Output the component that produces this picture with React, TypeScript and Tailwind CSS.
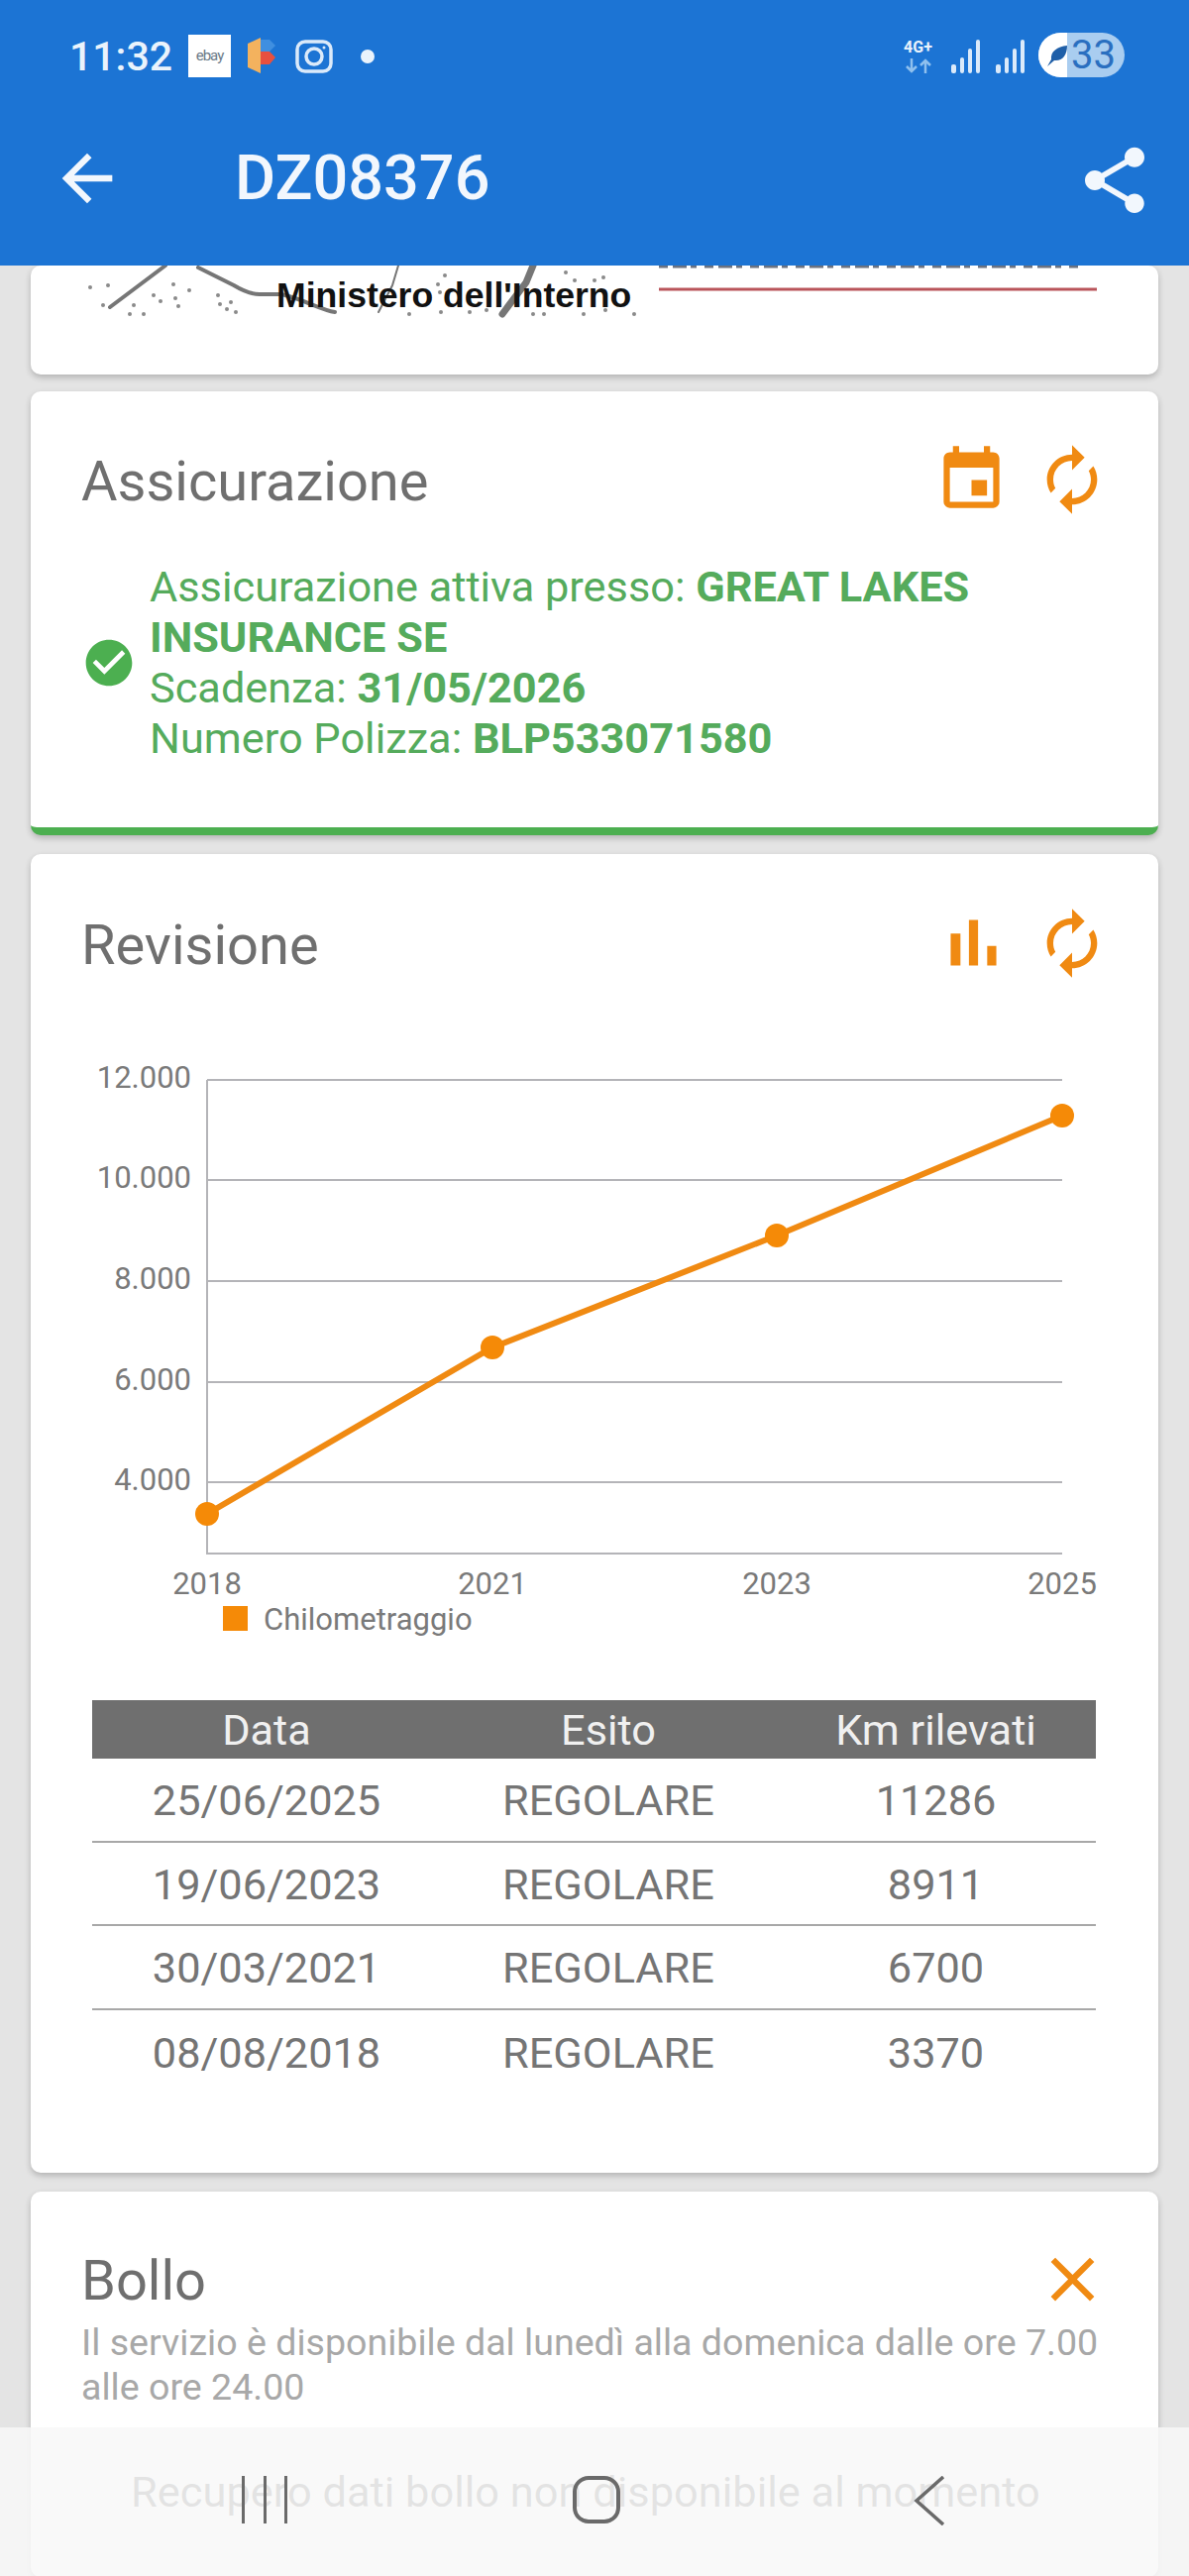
const ORANGE = "#f08a12";

const renewPath =
  "M12 6v3l4-4-4-4v3c-4.42 0-8 3.58-8 8 0 1.57.46 3.03 1.24 4.26L6.7 14.8c-.45-.83-.7-1.79-.7-2.8 0-3.31 2.69-6 6-6zm6.76 1.74L17.3 9.2c.44.84.7 1.79.7 2.8 0 3.31-2.69 6-6 6v-3l-4 4 4 4v-3c4.42 0 8-3.58 8-8 0-1.57-.46-3.03-1.24-4.26z";

function Icon({ d, size, color = ORANGE }: { d: string; size: number; color?: string }) {
  return (
    <svg viewBox="0 0 24 24" width={size} height={size} fill={color} className="block shrink-0">
      <path d={d} />
    </svg>
  );
}

function Signal() {
  return (
    <svg width="31" height="34" viewBox="0 0 31 34" className="block">
      <rect x="0" y="25" width="5" height="9" rx="2" fill="#dbeafa" />
      <rect x="9" y="18" width="4" height="16" rx="2" fill="#dbeafa" />
      <rect x="17" y="9" width="4" height="25" rx="2" fill="#dbeafa" />
      <rect x="25" y="0" width="4" height="34" rx="2" fill="#dbeafa" />
    </svg>
  );
}

function StatusBar() {
  return (
    <div className="flex h-[112px] items-start pt-[33px] pl-[70px] text-[#eaf3fc]">
      <span className="mt-[2px] w-[120px] text-[41px] leading-[44px] font-medium">11:32</span>
      <div className="mt-[2px] flex h-[43px] w-[43px] items-center justify-center bg-white text-[15px] tracking-[-1px] text-[#6b7a88]">
        ebay
      </div>
      <svg width="28" height="36" viewBox="0 0 28 36" className="mt-[5px] ml-[17px] block">
        <path d="M0 6 13 0v36L0 30z" fill="#f3b25e" />
        <path d="M13 2h9l6 6-6 6h-9z" fill="#3f8fe0" />
        <path d="M13 14h9l6 6-6 7h-9z" fill="#e8503f" />
      </svg>
      <svg width="38" height="34" viewBox="0 0 38 34" className="mt-[7px] ml-[20px] block" fill="none" stroke="#dbeafa" strokeWidth="3.5">
        <rect x="2" y="2" width="34" height="30" rx="8" />
        <ellipse cx="19" cy="17" rx="8" ry="8" />
        <circle cx="29" cy="8" r="1.5" fill="#dbeafa" stroke="none" />
      </svg>
      <div className="mt-[17px] ml-[28px] h-[14px] w-[14px] rounded-full bg-[#eaf3fc]" />
      <div className="ml-auto flex items-start pr-[65px]">
        <div className="mt-[7px] flex w-[37px] flex-col items-center leading-none">
          <span className="text-[16px] font-bold">4G+</span>
          <svg width="28" height="15" viewBox="0 0 28 15" fill="none" stroke="#8fc0ee" strokeWidth="2.5" className="mt-[3px] block">
            <path d="M7 0v13M2 8l5 5 5-5M21 15V2M16 7l5-5 5 5" />
          </svg>
        </div>
        <div className="mt-[7px] ml-[15px]">
          <Signal />
        </div>
        <div className="mt-[7px] ml-[14px]">
          <Signal />
        </div>
        <div className="ml-[12px] flex h-[45px] w-[87px] overflow-hidden rounded-full bg-[#a9cdf0]">
          <div className="flex w-[29px] items-center justify-end bg-white">
            <svg width="24" height="26" viewBox="0 0 24 26">
              <path d="M4 24 8 17C7 9 14 4 24 3c0 10-5 16-13 15z" fill="#1f5fa8" />
            </svg>
          </div>
          <span className="pl-[4px] text-[40px] leading-[45px] text-[#2a6fc0]">33</span>
        </div>
      </div>
    </div>
  );
}

function Toolbar() {
  return (
    <div className="flex h-[136px] items-start pt-[30px] pr-[35px] pl-[50px]">
      <Icon size={76} color="#f2f7fd" d="M20 11H7.83l5.59-5.59L12 4l-8 8 8 8 1.41-1.41L7.83 13H20v-2z" />
      <h1 className="ml-[111px] text-[63px] leading-[76px] font-medium text-[#f2f7fd]">DZ08376</h1>
      <div className="ml-auto">
        <Icon
          size={80}
          color="#f2f7fd"
          d="M18 16.08c-.76 0-1.44.3-1.96.77L8.91 12.7c.05-.23.09-.46.09-.7s-.04-.47-.09-.7l7.05-4.11c.54.5 1.25.81 2.04.81 1.66 0 3-1.34 3-3s-1.34-3-3-3-3 1.34-3 3c0 .24.04.47.09.7L8.04 9.81C7.5 9.31 6.79 9 6 9c-1.66 0-3 1.34-3 3s1.34 3 3 3c.79 0 1.5-.31 2.04-.81l7.12 4.16c-.05.21-.08.43-.08.65 0 1.61 1.31 2.92 2.92 2.92s2.92-1.31 2.92-2.92-1.31-2.92-2.92-2.92z"
        />
      </div>
    </div>
  );
}

// bottom of the ministry letterhead, mostly scrolled under the app bar
function Letterhead() {
  const specks = [
    [60, 22], [78, 20], [73, 40], [104, 40], [100, 49], [114, 49], [144, 19], [124, 30], [131, 36], [146, 33],
    [149, 41], [160, 25], [189, 30], [191, 39], [202, 37], [198, 44], [207, 47], [418, 10], [411, 19], [413, 27],
    [382, 49], [414, 47], [443, 47], [460, 45], [507, 49], [518, 49], [540, 7], [569, 15], [578, 12], [549, 15],
    [558, 49], [580, 45], [609, 49],
  ];
  return (
    <svg width="1137" height="110" viewBox="0 0 1137 110" className="block">
      <g fill="none" stroke="#767676" strokeWidth="4" strokeLinecap="round">
        <path d="M136 0 80 42" />
        <path d="M169 2 205 20c10 6 18 9 26 9h22c20 4 40 16 54 18" />
        <path d="M371 0 365 20 351 47" strokeWidth="2" />
        <path d="M507 0 500 17 476 49" strokeWidth="7" />
      </g>
      <g fill="#8a8a8a">
        {specks.map(([x, y], i) => (
          <circle key={i} cx={x} cy={y} r="2" />
        ))}
      </g>
      <text x="248" y="42" fill="#111111" fontSize="35.6" fontWeight="700" fontFamily="'Liberation Sans', sans-serif">
        Ministero dell'Interno
      </text>
      <path d="M634 1h425" stroke="#6b7280" strokeWidth="3" strokeDasharray="9 5 14 4 6 8" />
      <path d="M634 24h442" stroke="#b9545a" strokeWidth="3" />
    </svg>
  );
}

function CardHead({ title, children }: { title: string; children: React.ReactNode }) {
  return (
    <div className="flex items-center pr-[49px] pl-[51px]">
      <h2 className="h-[76px] pt-[4px] text-[56px] leading-[72px] text-[#6f6f6f]">{title}</h2>
      <div className="ml-auto flex items-center">{children}</div>
    </div>
  );
}

function InsuranceBody() {
  return (
    <div className="mt-[45px] flex items-center pr-[60px] pl-[51px] text-[43.3px] leading-[51px] text-[#55ab5c]">
      <Icon size={56} color="#4caf50" d="M12 2C6.48 2 2 6.48 2 12s4.48 10 10 10 10-4.48 10-10S17.52 2 12 2zm-2 15l-5-5 1.41-1.41L10 14.17l7.59-7.59L19 8l-9 9z" />
      <p className="ml-[13px]">
        Assicurazione attiva presso: <b className="font-bold">GREAT LAKES INSURANCE SE</b>
        <br />
        Scadenza: <b className="font-bold">31/05/2026</b>
        <br />
        Numero Polizza: <b className="font-bold">BLP533071580</b>
      </p>
    </div>
  );
}

const chartFont = { fontFamily: "Roboto, sans-serif" };

function KmChart() {
  const gridY = [
    { y: 1090, label: "12.000" },
    { y: 1191, label: "10.000" },
    { y: 1293, label: "8.000" },
    { y: 1395, label: "6.000" },
    { y: 1496, label: "4.000" },
  ];
  const points = [
    { x: 209, y: 1528, year: "2018" },
    { x: 497, y: 1360, year: "2021" },
    { x: 784, y: 1247, year: "2023" },
    { x: 1072, y: 1126, year: "2025" },
  ];
  return (
    <svg viewBox="31 1060 1137 620" width="1137" height="620" className="mt-[69px] block" style={chartFont}>
      {gridY.map((g) => (
        <g key={g.y}>
          <path d={`M209 ${g.y}H1072`} stroke="#b4b4b8" strokeWidth="2" />
          <text x="193" y={g.y + 8} textAnchor="end" fontSize="31" fill="#7a7a7a">
            {g.label}
          </text>
        </g>
      ))}
      <path d="M209 1090V1568H1072" fill="none" stroke="#b4b4b8" strokeWidth="2" />
      <polyline points={points.map((p) => `${p.x},${p.y}`).join(" ")} fill="none" stroke={ORANGE} strokeWidth="6" />
      {points.map((p) => (
        <g key={p.year}>
          <circle cx={p.x} cy={p.y} r="12" fill="#f58a07" />
          <text x={p.x} y={1609} textAnchor="middle" fontSize="31" fill="#7a7a7a">
            {p.year}
          </text>
        </g>
      ))}
      <rect x="225" y="1621" width="25" height="25" fill="#f58a07" />
      <text x="266" y="1645" fontSize="31" fill="#7a7a7a">
        Chilometraggio
      </text>
    </svg>
  );
}

const inspections = [
  ["25/06/2025", "REGOLARE", "11286"],
  ["19/06/2023", "REGOLARE", "8911"],
  ["30/03/2021", "REGOLARE", "6700"],
  ["08/08/2018", "REGOLARE", "3370"],
];

function InspectionTable() {
  return (
    <div className="mt-[36px] ml-[62px] w-[1013px] text-center text-[43.3px]">
      <div className="grid h-[59px] grid-cols-[352px_338px_323px] items-center bg-[#6f6f6f] pt-[2px] leading-[57px] text-[#f0f0f0]">
        <span>Data</span>
        <span>Esito</span>
        <span>Km rilevati</span>
      </div>
      {inspections.map((row, i) => (
        <div
          key={row[0]}
          className={`grid h-[84.5px] grid-cols-[352px_338px_323px] items-center pt-[5px] text-[#757575] ${
            i < inspections.length - 1 ? "border-b-2 border-[#a8a8a8]" : ""
          }`}
        >
          {row.map((cell, c) => (
            <span key={c}>{cell}</span>
          ))}
        </div>
      ))}
    </div>
  );
}

export default function App() {
  const cardClass = "mx-[31px] rounded-[10px] bg-white shadow-[0_3px_6px_rgba(0,0,0,0.22)]";

  return (
    <div className="relative h-[2600px] w-[1200px] overflow-hidden bg-[#e4e4e4] font-['Roboto',sans-serif]">
      <header className="relative z-10 h-[268px] bg-[#1c74d4]">
        <StatusBar />
        <Toolbar />
      </header>

      <section className={cardClass}>
        <Letterhead />
      </section>

      <section className={`${cardClass} mt-[17px] border-b-[8px] border-[#4caf50] pt-[51px] pb-[64px]`}>
        <CardHead title="Assicurazione">
          <Icon size={75} d="M17 12h-5v5h5v-5zM16 1v2H8V1H6v2H5c-1.11 0-1.99.9-1.99 2L3 19c0 1.1.89 2 2 2h14c1.1 0 2-.9 2-2V5c0-1.1-.9-2-2-2h-1V1h-2zm3 18H5V8h14v11z" />
          <div className="ml-[26px]">
            <Icon size={76} d={renewPath} />
          </div>
        </CardHead>
        <InsuranceBody />
      </section>

      <section className={`${cardClass} mt-[19px] pt-[50px] pb-[80px]`}>
        <CardHead title="Revisione">
          <Icon size={79} d="M5 9.2h3V19H5zM10.6 5h2.8v14h-2.8zm5.6 8H19v6h-2.8z" />
          <div className="ml-[22px]">
            <Icon size={76} d={renewPath} />
          </div>
        </CardHead>
        <KmChart />
        <InspectionTable />
      </section>

      <section className={`${cardClass} mt-[19px] pt-[50px]`}>
        <CardHead title="Bollo">
          <Icon size={75} d="M19 6.41L17.59 5 12 10.59 6.41 5 5 6.41 10.59 12 5 17.59 6.41 19 12 13.41 17.59 19 19 17.59 13.41 12z" />
        </CardHead>
        <p className="mt-[4px] pr-[40px] pl-[51px] text-[37.6px] leading-[45px] text-[#a8a8a8]">
          Il servizio è disponibile dal lunedì alla domenica dalle ore 7.00 alle ore 24.00
        </p>
        <p className="mt-[59px] pb-[60px] pl-[101px] text-[43.4px] leading-[50px] text-[#6e6e6e]">
          Recupero dati bollo non disponibile al momento
        </p>
      </section>

      {/* system navigation bar, sits translucent over the page */}
      <nav className="absolute right-0 bottom-0 left-0 flex h-[150px] items-start bg-[#f8f8f8]/85 pt-[49px] pl-[244px]">
        <div className="flex h-[48px] w-[46px] justify-between">
          <div className="w-[3px] bg-[#6a6a6a]" />
          <div className="w-[3px] bg-[#6a6a6a]" />
          <div className="w-[3px] bg-[#6a6a6a]" />
        </div>
        <div className="ml-[288px] h-[48px] w-[48px] rounded-[16px] border-[4px] border-[#6a6a6a]" />
        <svg width="32" height="50" viewBox="0 0 32 50" fill="none" stroke="#6a6a6a" strokeWidth="3.5" className="ml-[296px] block">
          <path d="M30 1 3 25l27 24" />
        </svg>
      </nav>
    </div>
  );
}
